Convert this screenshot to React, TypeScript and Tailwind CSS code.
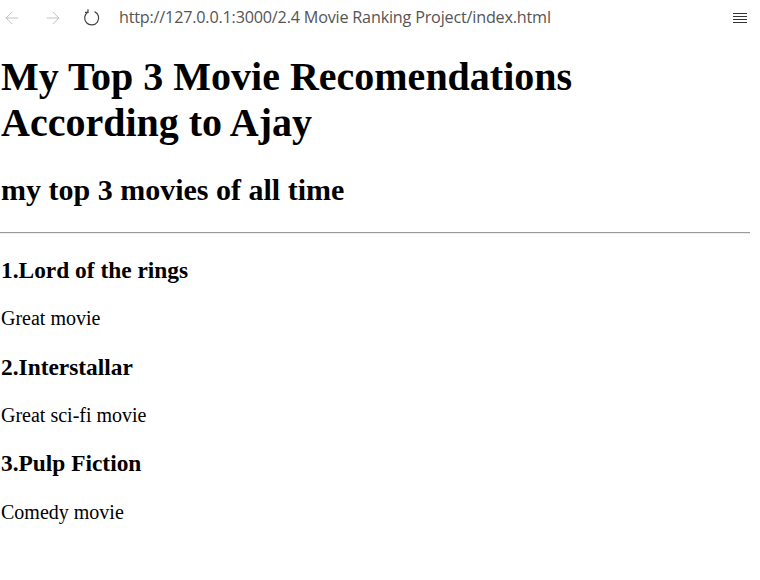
import { ArrowLeft, ArrowRight } from 'lucide-react'

const MOVIES = [
  { title: '1.Lord of the rings', note: 'Great movie' },
  { title: '2.Interstallar', note: 'Great sci-fi movie' },
  { title: '3.Pulp Fiction', note: 'Comedy movie' },
]

function Toolbar() {
  return (
    <div className="flex h-[35px] items-center bg-white text-[#555]">
      <div className="flex w-[119px] items-center">
        <ArrowLeft size={20} strokeWidth={1} className="ml-[2px] text-[#b4b4b4]" />
        <ArrowRight size={20} strokeWidth={1} className="ml-[21px] text-[#b4b4b4]" />
        <svg width="20" height="20" viewBox="0 0 20 20" className="ml-[19px]" fill="none" stroke="#444" strokeWidth="1.2">
          <path d="M12.6 3.6 A7 7 0 1 1 6 4" />
          <path d="M6 1.2 L6 4.3 L3 4.3" />
        </svg>
      </div>
      <span className="flex-1 text-[16.2px] tracking-[-0.2px] [font-family:'Open_Sans',sans-serif]">
        http://127.0.0.1:3000/2.4 Movie Ranking Project/index.html
      </span>
      <div className="mr-[13px] flex w-[14px] flex-col gap-[2px]">
        <span className="h-[1px] bg-[#333]" />
        <span className="h-[1px] bg-[#333]" />
        <span className="h-[1px] bg-[#333]" />
        <span className="h-[1px] bg-[#333]" />
      </div>
    </div>
  )
}

export default function App() {
  return (
    <div className="h-[580px] w-[760px] overflow-hidden bg-white text-black [font-family:'Liberation_Serif',serif]">
      <Toolbar />
      <div className="pl-[1px] pr-[10px] pt-[19px]">
        <h1 className="text-[40px] font-bold leading-[46px]">
          My Top 3 Movie Recomendations
          <br />
          According to Ajay
        </h1>
        <h2 className="mt-[27px] text-[30px] font-bold leading-[34.5px]">my top 3 movies of all time</h2>
        <hr className="-ml-[1px] mt-[24px] border-t border-b border-t-[#9a9a9a] border-b-[#eee]" />
        {MOVIES.map(m => (
          <div key={m.title}>
            <h3 className="mt-[23.4px] text-[23.4px] font-bold leading-[27px]">{m.title}</h3>
            <p className="mt-[23.4px] text-[20px] leading-[23px]">{m.note}</p>
          </div>
        ))}
      </div>
    </div>
  )
}
